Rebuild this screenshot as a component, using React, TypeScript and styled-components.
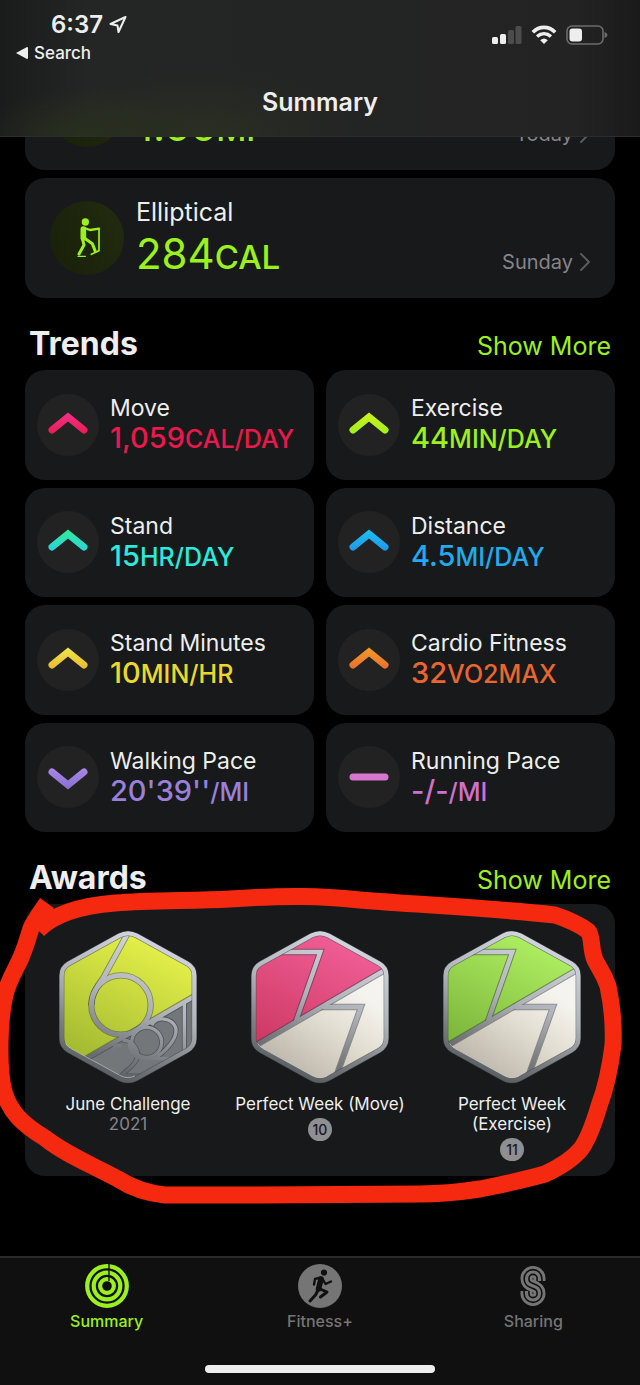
import React, { useId } from "react";
import styled, { createGlobalStyle } from "styled-components";

const GlobalStyle = createGlobalStyle`
  * { box-sizing: border-box; }
  body {
    margin: 0;
    background: #000;
    color: #eee;
    font-family: Inter, "Liberation Sans", sans-serif;
  }
  button { font: inherit; color: inherit; background: none; border: 0; padding: 0; cursor: pointer; }
  a { color: inherit; text-decoration: none; }
  h1, h2, p { margin: 0; }
  svg { display: block; flex: none; }
`;

const lime = "#9cf01e";
const panel = "#17191a";

const Screen = styled.div`
  display: flex;
  flex-direction: column;
  min-height: 100vh;
  overflow-x: clip;
`;

const Header = styled.header`
  position: sticky;
  top: 0;
  z-index: 2;
  height: 137px;
  padding-top: 10px;
  border-bottom: 1px solid #2c2d2d;
  background:
    radial-gradient(ellipse 110px 50px at 87px 137px, #29301e, transparent),
    radial-gradient(ellipse 160px 70px at 200px 137px, #2a2f22, transparent),
    linear-gradient(90deg, #1a1b1b, #242525 14%, #232324 90%, #1a1a1b);
`;

const StatusRow = styled.div`
  display: flex;
  justify-content: space-between;
  padding: 0 32px 0 51px;
  height: 30px;
`;

const Clock = styled.div`
  display: flex;
  align-items: center;
  gap: 6px;
  font-size: 24px;
  font-weight: 600;
  line-height: 28px;
`;

const Indicators = styled.div`
  display: flex;
  align-items: center;
  gap: 9px;
  padding-top: 20px;
`;

const BackLink = styled.a`
  display: flex;
  align-items: center;
  gap: 6px;
  width: max-content;
  margin-left: 16px;
  font-size: 17px;
  font-weight: 500;
  line-height: 26px;
`;

const Title = styled.h1`
  margin-top: 20px;
  text-align: center;
  font-size: 25px;
  font-weight: 600;
  line-height: 32px;
`;

const Main = styled.main`
  flex: 1;
  margin-top: -87px;
  padding: 0 25px 80px;
`;

const Workouts = styled.div`
  display: grid;
  gap: 8px;
`;

const WorkoutCard = styled.a`
  display: flex;
  align-items: center;
  gap: 12px;
  height: 120px;
  padding: 0 25px;
  border-radius: 20px;
  background: ${panel};
`;

const WorkoutIcon = styled.div`
  width: 74px;
  height: 74px;
  border-radius: 50%;
  background: linear-gradient(60deg, #182008, #222c10);
`;

const WorkoutDetails = styled.div`
  display: flex;
  flex: 1;
  flex-direction: column;
  justify-content: flex-end;
  min-height: 88px;
`;

const WorkoutName = styled.p`
  font-size: 25px;
  line-height: 34px;
`;

const WorkoutValue = styled.p`
  color: ${lime};
  font-size: 42px;
  line-height: 50px;
`;

const WorkoutUnit = styled.span`
  font-size: 33px;
  font-weight: 500;
`;

const WorkoutDay = styled.div`
  display: flex;
  align-self: flex-end;
  align-items: center;
  gap: 7px;
  padding-bottom: 20px;
  color: #85858a;
  font-size: 20px;
  line-height: 32px;
`;

const SectionHead = styled.div`
  display: flex;
  align-items: baseline;
  justify-content: space-between;
  height: 72px;
  padding: 24px 4px 0;
`;

const SectionTitle = styled.h2`
  font-size: 32px;
  font-weight: 700;
  line-height: 44px;
`;

const ShowMore = styled.a`
  color: ${lime};
  font-size: 25px;
  line-height: 44px;
`;

const TrendGrid = styled.div`
  display: grid;
  grid-template-columns: 1fr 1fr;
  grid-auto-rows: 1fr;
  gap: 8px 12px;
  min-height: 462px;
`;

const TrendCard = styled.a`
  display: flex;
  align-items: center;
  gap: 11px;
  padding-left: 12px;
  border-radius: 20px;
  background: ${panel};
`;

const TrendIcon = styled.div`
  display: grid;
  flex: none;
  place-items: center;
  width: 62px;
  height: 62px;
  border-radius: 50%;
  background: #222;
`;

const TrendName = styled.p`
  font-size: 23px;
  line-height: 28px;
  white-space: nowrap;
`;

const TrendValue = styled.p<{ $color: string }>`
  color: ${(p) => p.$color};
  font-size: 29px;
  font-weight: 500;
  line-height: 32px;
  white-space: nowrap;
`;

const TrendUnit = styled.span`
  font-size: 25px;
`;

const AwardPanel = styled.div`
  position: relative;
  display: grid;
  grid-template-columns: repeat(3, 1fr);
  padding: 26px 7px 15px;
  border-radius: 20px;
  background: ${panel};
`;

const Award = styled.a`
  display: flex;
  flex-direction: column;
  align-items: center;
  text-align: center;
  font-size: 17px;
  line-height: 20px;
`;

const AwardName = styled.p`
  margin-top: 10px;
  padding: 0 8px;
`;

const AwardYear = styled.p`
  color: #85858a;
`;

const AwardCount = styled.span`
  min-width: 24px;
  height: 23px;
  margin-top: 4px;
  padding: 0 5px;
  border-radius: 12px;
  background: #8e8e93;
  color: #17191a;
  font-size: 14px;
  font-weight: 500;
  line-height: 23px;
`;

const Marker = styled.svg`
  position: absolute;
  top: -24px;
  left: -25px;
  width: calc(100% + 50px);
  height: 336px;
  pointer-events: none;
`;

const Footer = styled.footer`
  position: sticky;
  bottom: 0;
  z-index: 2;
  display: flex;
  flex-direction: column;
  align-items: center;
  justify-content: space-between;
  height: 129px;
  padding-bottom: 12px;
  border-top: 2px solid #2a2a2a;
  background: #101010;
`;

const Tabs = styled.nav`
  display: grid;
  grid-template-columns: repeat(3, 1fr);
  width: 100%;
  padding-top: 6px;
`;

const Tab = styled.button<{ $active?: boolean }>`
  display: flex;
  flex-direction: column;
  align-items: center;
  gap: 3px;
  color: ${(p) => (p.$active ? lime : "#757575")};
  font-size: 16px;
  font-weight: 500;
  line-height: 20px;
`;

const HomeBar = styled.div`
  width: 36%;
  height: 8px;
  border-radius: 4px;
  background: #eee;
`;

function LocationArrow() {
  return (
    <svg width="18" height="20" viewBox="0 0 18 20" fill="none" stroke="#eee" strokeWidth="2" strokeLinejoin="round">
      <path d="M16.500 2L1.500 9L8.500 10.500L9.500 17Z" />
    </svg>
  );
}

function StatusIcons() {
  return (
    <Indicators>
      <svg width="30" height="19" viewBox="0 0 30 19">
        <rect x="0" y="11" width="6" height="7" rx="1.500" fill="#eee" />
        <rect x="8" y="8" width="6" height="10" rx="1.500" fill="#eee" />
        <rect x="16" y="4" width="6" height="14" rx="1.500" fill="#4c4c4d" />
        <rect x="23.500" y="0" width="6" height="18" rx="1.500" fill="#4c4c4d" />
      </svg>
      <svg width="26" height="20" viewBox="0 0 26 20" fill="none" stroke="#eee">
        <path d="M1.800 7.200C8.400 .8 17.600 .8 24.200 7.200" strokeWidth="3.600" />
        <path d="M6 11.600C10.200 7.800 15.800 7.800 20 11.600" strokeWidth="3.400" />
        <path d="M13 19L9.200 15.200Q13 12 16.800 15.200Z" fill="#eee" stroke="none" />
      </svg>
      <svg width="42" height="20" viewBox="0 0 42 20">
        <rect x="1" y="1" width="36" height="18" rx="5" fill="none" stroke="#6c6c6d" strokeWidth="1.600" />
        <rect x="3.500" y="3.500" width="12.500" height="13" rx="3" fill="#eee" />
        <path d="M38.500 7Q41.500 8 41.500 10T38.500 13Z" fill="#6c6c6d" />
      </svg>
    </Indicators>
  );
}

function DisclosureChevron() {
  return (
    <svg width="10" height="18" viewBox="0 0 10 18" fill="none" stroke="#5b5b5f" strokeWidth="2" strokeLinecap="round" strokeLinejoin="round">
      <path d="M1 1L9 9L1 17" />
    </svg>
  );
}

function EllipticalFigure() {
  return (
    <svg width="74" height="74" viewBox="0 0 222 222" fill="none" stroke={lime} strokeLinecap="round" strokeLinejoin="round">
      <circle cx="106" cy="63" r="11" fill={lime} stroke="none" />
      <path d="M100 84V110" strokeWidth="17" />
      <path d="M103 81L120 87L147 83" strokeWidth="7" />
      <path d="M147 83V149L124 160" strokeWidth="5" />
      <path d="M97 112L102 132L87 159" strokeWidth="9" />
      <path d="M104 112L127 128L136 151" strokeWidth="9" />
      <path d="M84 166H106" strokeWidth="4" />
    </svg>
  );
}

type Direction = "up" | "down" | "flat";

function TrendMark({ direction, from, to }: { direction: Direction; from: string; to: string }) {
  const id = useId();
  const shapes = {
    up: "M4 19L20 6L36 19",
    down: "M4 9L20 22L36 9",
    flat: "M4 14H36",
  };
  return (
    <svg width="40" height="28" viewBox="0 0 40 28">
      <defs>
        <linearGradient id={id} gradientUnits="userSpaceOnUse" x1="0" y1="3" x2="0" y2="24">
          <stop stopColor={from} />
          <stop offset="1" stopColor={to} />
        </linearGradient>
      </defs>
      <path d={shapes[direction]} fill="none" stroke={`url(#${id})`} strokeWidth="7" strokeLinecap="round" />
    </svg>
  );
}

const hexagon =
  "M181 17Q207 3 233 17L385 101Q406 113 406 137V325Q406 349 385 361L233 445Q207 459 181 445L29 361Q8 349 8 325V137Q8 113 29 101Z";

interface MedalProps {
  kind: "month" | "week";
  light: string;
  dark: string;
}

function Medal({ kind, light, dark }: MedalProps) {
  const id = useId();
  const metal = `url(#${id}m)`;
  return (
    <svg width="138" height="154" viewBox="0 0 414 462" fill="none">
      <defs>
        <linearGradient id={`${id}m`} gradientUnits="userSpaceOnUse" x1="300" y1="20" x2="130" y2="450">
          <stop stopColor="#d4d7e0" />
          <stop offset="0.450" stopColor="#b0b3ba" />
          <stop offset="0.750" stopColor="#7b7e83" />
          <stop offset="1" stopColor="#56595c" />
        </linearGradient>
        <linearGradient id={`${id}e`} x1="0.700" y1="0.100" x2="0.300" y2="1">
          <stop stopColor={light} />
          <stop offset="1" stopColor={dark} />
        </linearGradient>
        <linearGradient id={`${id}c`} x1="0.900" y1="0.300" x2="0.300" y2="1">
          <stop stopColor="#f5f3ee" />
          <stop offset="0.400" stopColor="#e2ddd1" />
          <stop offset="1" stopColor="#b8b2a6" />
        </linearGradient>
        <clipPath id={`${id}h`}>
          <path d={hexagon} />
        </clipPath>
      </defs>
      <g clipPath={`url(#${id}h)`}>
        <path d={hexagon} fill={`url(#${id}e)`} />
        {kind === "month" ? (
          <>
            <path d="M83 385L403 200L414 462H0Z" fill="#73777a" />
            <g stroke="#30343a" strokeOpacity="0.500" strokeWidth="19">
              <path d="M78 388L406 199" />
              <circle cx="186" cy="225" r="89" />
              <path d="M205 12L132 145Q98 188 97 225" />
            </g>
            <g stroke="#3a3e42" strokeOpacity="0.600" strokeWidth="15">
              <path d="M190 330C224 330 244 366 232 390C222 410 205 418 186 438H270" />
              <circle cx="263" cy="337" r="45" />
              <path d="M278 286C294 256 338 264 350 292C356 318 336 344 312 366L288 386" />
              <path d="M376 216V372" />
            </g>
            <g stroke={metal}>
              <path d="M78 388L406 199" strokeWidth="13" />
              <circle cx="186" cy="225" r="89" strokeWidth="14" />
              <path d="M205 12L132 145Q98 188 97 225" strokeWidth="14" />
              <g strokeWidth="10">
                <path d="M166 366C160 346 178 342 186 350" />
                <path d="M190 330C224 330 244 366 232 390C222 410 205 418 186 438H270" />
                <circle cx="263" cy="337" r="45" />
                <path d="M212 330C208 362 224 384 258 386H334" />
                <path d="M278 286C294 256 338 264 350 292C356 318 336 344 312 366L288 386" />
                <path d="M376 216V372" />
              </g>
              <path d="M80 388L172 440" strokeWidth="6" />
            </g>
          </>
        ) : (
          <>
            <path d="M20 343L406 118L414 462H0Z" fill={`url(#${id}c)`} />
            <g stroke="#30343a" strokeOpacity="0.500" strokeWidth="19">
              <path d="M14 346L412 114" />
              <path d="M86 66H208L134 276" />
              <path d="M210 231H330L254 444" />
            </g>
            <g stroke={metal} strokeWidth="13">
              <path d="M14 346L412 114" />
              <path d="M86 66H208L134 276" />
              <path d="M210 231H330L254 444" />
            </g>
          </>
        )}
      </g>
      <path d={hexagon} stroke="#44484d" strokeOpacity="0.800" strokeWidth="16" />
      <path d={hexagon} stroke={metal} strokeWidth="13" />
      <path d="M20 340Q22 348 38 357L186 438Q207 448 228 438" stroke="#c9ccd0" strokeWidth="2" />
    </svg>
  );
}

function RingsIcon() {
  return (
    <svg width="44" height="44" viewBox="0 0 44 44" fill="none" stroke={lime} strokeWidth="4.200">
      <circle cx="22" cy="22" r="19.800" />
      <circle cx="22" cy="22" r="13.300" />
      <circle cx="22" cy="22" r="6.900" />
      <path d="M24 0V17" stroke="#101010" strokeWidth="1.400" />
    </svg>
  );
}

function RunnerIcon() {
  return (
    <svg width="44" height="44" viewBox="0 0 44 44" fill="none" stroke="#101010" strokeLinecap="round" strokeLinejoin="round">
      <circle cx="22" cy="22" r="22" fill="#757575" stroke="none" />
      <circle cx="26" cy="8.500" r="3.100" fill="#101010" stroke="none" />
      <path d="M23 15L20.500 25" strokeWidth="5.500" />
      <path d="M22 13.600L17 15L16 20.500" strokeWidth="2.400" />
      <path d="M24.500 15L27.500 20L33 17.500" strokeWidth="2.400" />
      <path d="M21 24.500L29 28L22.500 33" strokeWidth="3" />
      <path d="M20 26L17.500 31L12 37" strokeWidth="3" />
    </svg>
  );
}

function SharingIcon() {
  const curve = "M19.500 17V14.500A6.500 6.500 0 0 0 6.500 14.500C6.500 19 8.500 20.500 13 22C17.500 23.500 19.500 25 19.500 29.500A6.500 6.500 0 0 1 6.500 29.500V27";
  return (
    <svg width="26" height="44" viewBox="0 0 26 44" fill="none" stroke="#757575">
      <path d={curve} strokeWidth="12" />
      <path d={curve} stroke="#101010" strokeWidth="6.400" />
      <path d={curve} strokeWidth="3.200" />
    </svg>
  );
}

const trends: { name: string; value: string; unit: string; color: string; from: string; to: string; direction: Direction }[] = [
  { name: "Move", value: "1,059", unit: "CAL/DAY", color: "#e8194c", from: "#f0308a", to: "#ea1a50", direction: "up" },
  { name: "Exercise", value: "44", unit: "MIN/DAY", color: "#9cf01e", from: "#ccf01e", to: "#9cf01e", direction: "up" },
  { name: "Stand", value: "15", unit: "HR/DAY", color: "#2de8dc", from: "#2eeb9c", to: "#2ccfe0", direction: "up" },
  { name: "Distance", value: "4.5", unit: "MI/DAY", color: "#1fabec", from: "#1fbdf0", to: "#1f95e8", direction: "up" },
  { name: "Stand Minutes", value: "10", unit: "MIN/HR", color: "#ebd82c", from: "#eee34a", to: "#e6b92c", direction: "up" },
  { name: "Cardio Fitness", value: "32", unit: "VO2MAX", color: "#ea6630", from: "#f09a26", to: "#ea6b30", direction: "up" },
  { name: "Walking Pace", value: "20'39''", unit: "/MI", color: "#9a80d8", from: "#ad8ae8", to: "#8a72d2", direction: "down" },
  { name: "Running Pace", value: "-/-", unit: "/MI", color: "#d070cc", from: "#dc7cd0", to: "#d070cc", direction: "flat" },
];

export default function App() {
  return (
    <Screen>
      <GlobalStyle />
      <Header>
        <StatusRow>
          <Clock>
            6:37 <LocationArrow />
          </Clock>
          <StatusIcons />
        </StatusRow>
        <BackLink href="#search">
          <svg width="12" height="12" viewBox="0 0 12 12" fill="#eee">
            <path d="M0 6L11 0Q12 0 12 1V11Q12 12 11 12Z" />
          </svg>
          Search
        </BackLink>
        <Title>Summary</Title>
      </Header>

      <Main>
        <Workouts>
          <WorkoutCard href="#today">
            <WorkoutIcon />
            <WorkoutDetails>
              <WorkoutValue>
                1.66<WorkoutUnit>MI</WorkoutUnit>
              </WorkoutValue>
            </WorkoutDetails>
            <WorkoutDay>
              Today <DisclosureChevron />
            </WorkoutDay>
          </WorkoutCard>
          <WorkoutCard href="#elliptical">
            <WorkoutIcon>
              <EllipticalFigure />
            </WorkoutIcon>
            <WorkoutDetails>
              <WorkoutName>Elliptical</WorkoutName>
              <WorkoutValue>
                284<WorkoutUnit>CAL</WorkoutUnit>
              </WorkoutValue>
            </WorkoutDetails>
            <WorkoutDay>
              Sunday <DisclosureChevron />
            </WorkoutDay>
          </WorkoutCard>
        </Workouts>

        <section>
          <SectionHead>
            <SectionTitle>Trends</SectionTitle>
            <ShowMore href="#trends">Show More</ShowMore>
          </SectionHead>
          <TrendGrid>
            {trends.map((t) => (
              <TrendCard href="#trend" key={t.name}>
                <TrendIcon>
                  <TrendMark direction={t.direction} from={t.from} to={t.to} />
                </TrendIcon>
                <div>
                  <TrendName>{t.name}</TrendName>
                  <TrendValue $color={t.color}>
                    {t.value}
                    <TrendUnit>{t.unit}</TrendUnit>
                  </TrendValue>
                </div>
              </TrendCard>
            ))}
          </TrendGrid>
        </section>

        <section>
          <SectionHead>
            <SectionTitle>Awards</SectionTitle>
            <ShowMore href="#awards">Show More</ShowMore>
          </SectionHead>
          <AwardPanel>
            <Award href="#june">
              <Medal kind="month" light="#e2ee48" dark="#9cb42e" />
              <AwardName>June Challenge</AwardName>
              <AwardYear>2021</AwardYear>
            </Award>
            <Award href="#move">
              <Medal kind="week" light="#ee5c94" dark="#c8345c" />
              <AwardName>Perfect Week (Move)</AwardName>
              <AwardCount>10</AwardCount>
            </Award>
            <Award href="#exercise">
              <Medal kind="week" light="#acec60" dark="#74ac34" />
              <AwardName>Perfect Week (Exercise)</AwardName>
              <AwardCount>11</AwardCount>
            </Award>
            <Marker viewBox="0 0 640 336" preserveAspectRatio="none" fill="none" stroke="#f4290f" strokeWidth="17" strokeLinejoin="round">
              <path d="M38 50C52 36 76 26 115 23C150 20 190 21 230 19C290 15 320 16 360 20C420 25 480 27 555 35C570 40 580 45 588 51C593 57 590 68 595 80C600 90 604 94 608 106C612 125 614 145 613 165C610 190 605 210 599 226C594 243 589 258 581 269C572 280 560 287 545 294C520 301 500 305 480 309C460 312 440 314 420 314L260 315H165C145 313 132 308 118 299C90 284 65 274 45 258C22 244 10 232 4 212C-2 190 -1 140 5 115C9 98 18 86 22 75C29 58 29 52 32 46C38 36 42 30 47 23" />
            </Marker>
          </AwardPanel>
        </section>
      </Main>

      <Footer>
        <Tabs>
          <Tab $active>
            <RingsIcon />
            Summary
          </Tab>
          <Tab>
            <RunnerIcon />
            Fitness+
          </Tab>
          <Tab>
            <SharingIcon />
            Sharing
          </Tab>
        </Tabs>
        <HomeBar />
      </Footer>
    </Screen>
  );
}
